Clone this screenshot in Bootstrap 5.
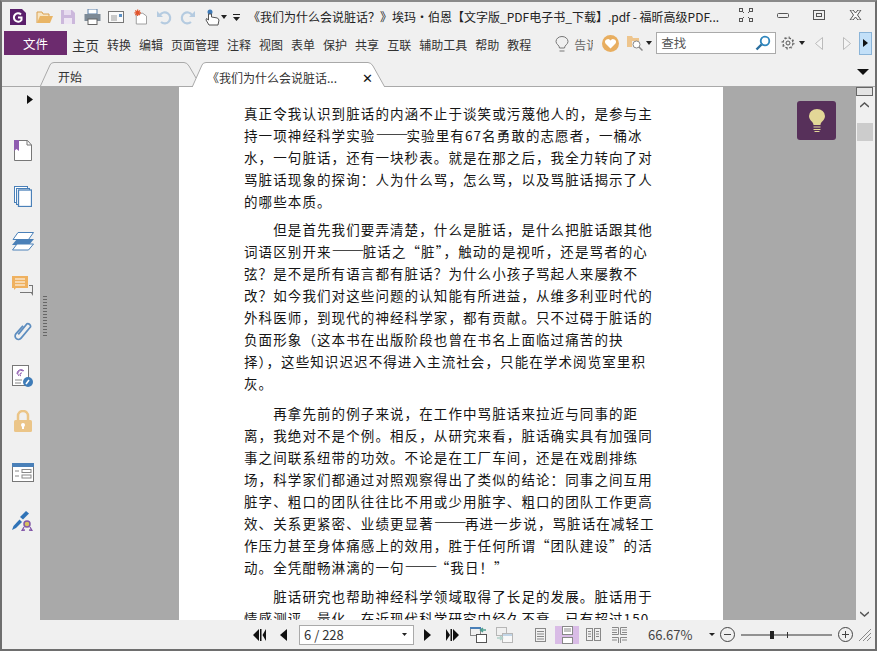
<!DOCTYPE html>
<html lang="zh"><head><meta charset="utf-8"><title>福昕高级PDF</title>
<link href="https://cdn.jsdelivr.net/npm/bootstrap@5.3.0/dist/css/bootstrap.min.css" rel="stylesheet">
<style>
html,body{margin:0;width:877px;height:651px;overflow:hidden;background:#f0f0f0}
body{font-family:"Noto Sans CJK SC","Liberation Sans",sans-serif;font-size:12px;color:#333}
.appwin{width:877px;height:651px;border:2px solid #6e6e6e;border-top-color:#8a8a8a;background:#f0f0f0;display:flex;flex-direction:column}
.titlerow{height:28px;flex:none;padding-top:2px;padding-right:2px}
.slot{flex:none;display:flex;align-items:center;justify-content:center}
.wintitle{margin-left:4px;font-size:12px;white-space:nowrap;color:#222}
.winctl{margin-top:-4px}
.w8{width:8px}.w9{width:9px}.w12{width:12px}.w13{width:13px}.w14{width:14px}.w15{width:15px}.w16{width:16px}.w17{width:17px}.w18{width:18px}.w20{width:20px}.w21{width:21px}.w24{width:24px}.w26{width:26px}.w28{width:28px}.w30{width:30px}.w36{width:36px}.w38{width:38px}.w103{width:103px}.w264{width:264px}
.ml2{margin-left:2px}.ml3{margin-left:3px}.ml4{margin-left:4px}.ml6{margin-left:6px}.ml7{margin-left:7px}.ml8{margin-left:8px}.ml9{margin-left:9px}.ml12{margin-left:12px}.ml23{margin-left:23px}.mln1{margin-left:-1px}.mln2{margin-left:-2px}
.menurow{height:26px;flex:none}
.filebtn{width:63px;height:24px;margin-left:2px;margin-top:-1px;padding-top:3px;background:#6c2b6e;color:#fff;display:flex;align-items:center;justify-content:center;font-size:12.5px;flex:none}
.menuitems{gap:8px;margin-left:5px;padding-top:4px;color:#333;white-space:nowrap}
.menuitems span:first-child{font-size:13.5px}
.tellme{width:19px;overflow:hidden;color:#666;justify-content:flex-start;white-space:nowrap;padding-top:4px}
.bulbslot{padding-top:3px}
.searchbox{width:120px;height:22px;background:#fff;border:1px solid #aaa;color:#555;padding-left:4px;display:flex;align-items:center;justify-content:space-between;flex:none;font-size:12.5px}
.nextbtn{height:23px;background:#c3e0f8;border:1px solid #8ab4d8}
.tabrow{height:31px;flex:none;border-bottom:1px solid #a9a9a9;position:relative}
.tabitem{position:absolute;top:6px;height:25px;padding-top:6px;white-space:nowrap}
.tabitem svg{position:absolute;left:0;top:0}
.tabitem span,.tabitem b{position:relative}
.tabhome{left:38px;width:156px;padding-left:18px}
.tabdoc{left:190px;width:195px;padding-left:15px;height:26px}
.tabname{display:inline-block;width:155px}
.tabclose{font-size:13px;color:#111}
.tabmore{position:absolute;left:855px;top:13px}
.mainrow{flex:1;min-height:0;display:flex}
.rail{width:38px;flex:none;background:#f0f0f0;display:flex;flex-direction:column;align-items:center;padding-left:3px}
.railopen{margin-top:8px;margin-left:14px}
.mt36{margin-top:36px}.mt25{margin-top:25px}.mt24{margin-top:24px}.mt23{margin-top:23px}.mt31{margin-top:31px}.mt27{margin-top:27px}
.viewer{flex:1;background:#a9a9a9;position:relative;overflow:hidden;display:flex}
.pdfpage{width:544px;height:533px;background:#fff;flex:none;margin-left:139px;padding:15px 60px 0 65px;font-size:13.5px;letter-spacing:1.1px;color:#151515;overflow:hidden}
.ln{height:22px;line-height:22px;white-space:nowrap}
.ln.first{text-indent:29.2px}
.ln.cutoff{height:13px;overflow:hidden}
.gap6{margin-bottom:6px}.gap8{margin-bottom:8px}.gap7{margin-bottom:7px}
.dashes{font-size:16.500px;letter-spacing:-1.900px;line-height:1}
.ideabtn{position:absolute;left:757px;top:14px;width:39px;height:39px;border-radius:3px;background:#57305a;display:flex;align-items:center;justify-content:center}
.grip{position:absolute;left:3px;top:208px;width:4px;height:43px;background-image:radial-gradient(circle,#666 50%,transparent 55%);background-size:2px 3px}
.sbar{width:19px;flex:none;background:#f0f0f0;display:flex;flex-direction:column;align-items:center;padding-right:2px}
.sbtn{width:17px;height:9px;background:#e4e4e4;border:1px solid #666;flex:none}
.supicon{margin-top:6px}
.sthumb{width:16px;height:18px;background:#ccc;margin-top:15px;flex:none}
.sdownicon{margin-top:auto;margin-bottom:3px}
.statusrow{height:29px;flex:none}
.pagebox{width:115px;height:20px;background:#fff;border:1px solid #aaa;color:#333;font-size:13px;padding:0 6px 0 4px;display:flex;align-items:center;justify-content:space-between;flex:none}
.zoomtxt{font-size:13px;color:#444;width:58px;flex:none;margin-left:17px}
.sel{background:#d9bce6;height:18px}
.endalign{justify-content:flex-end}
.dim{opacity:.55}
</style></head><body>
<div class="appwin">
 <div class="titlerow d-flex align-items-center">
  <div class="slot w18 ml7"><svg width="16" height="16" viewBox="0 0 16 16"><rect width="16" height="16" fill="#5a1f6b"/><path d="M12 0h4v4z" fill="#f0f0f0"/><path d="M11 5.500A4.200 4.200 0 1 0 11.500 11V8.500H8" fill="none" stroke="#fff" stroke-width="2"/></svg></div>
  <div class="slot w18 ml8"><svg width="17" height="14" viewBox="0 0 17 14"><path d="M1 13V2h5l1 2h6v2" fill="#f8e6c4" stroke="#d9a050"/><path d="M1 13l3-7h13l-3 7z" fill="#e9b566"/></svg></div>
  <div class="slot w14 ml8"><svg width="14" height="14" viewBox="0 0 14 14"><path d="M0 0h11l3 3v11H0z" fill="#ccb8dc"/><rect x="3" y="0" width="7" height="5" fill="#e7dcef"/><rect x="3" y="8" width="8" height="6" fill="#eee6f3"/></svg></div>
  <div class="slot w18 ml8"><svg width="17" height="16" viewBox="0 0 17 16"><rect x="4" y="0" width="9" height="5" fill="#fff" stroke="#5b7fa6"/><rect x=".5" y="5" width="16" height="7" fill="#7d8a96"/><rect x="4" y="10" width="9" height="5.500" fill="#fff" stroke="#666"/></svg></div>
  <div class="slot w16 ml7"><svg width="16" height="12" viewBox="0 0 16 12"><rect x=".5" y=".5" width="15" height="11" fill="#fafafa" stroke="#777"/><path d="M3 5h6M3 7h6M3 9h6" stroke="#999"/><rect x="11" y="3" width="3" height="3" fill="#5b8fc4"/></svg></div>
  <div class="slot w14 ml9"><svg width="15" height="16" viewBox="0 0 15 16"><path d="M3.500 4h7l4 3v8.500h-11z" fill="#fff" stroke="#999"/><path d="M5 0v7M1.500 3.500h7M2.500 1l5 5M7.500 1l-5 5" stroke="#e2532a" stroke-width="1.300"/></svg></div>
  <div class="slot w16 ml9"><svg width="16" height="15" viewBox="0 0 16 15"><path d="M4 5a5.500 5.500 0 1 1 1 7" fill="none" stroke="#b5cbe0" stroke-width="2.200"/><path d="M1 1v6h6z" fill="#b5cbe0"/></svg></div>
  <div class="slot w16 ml8"><svg width="16" height="15" viewBox="0 0 16 15"><path d="M12 5a5.500 5.500 0 1 0-1 7" fill="none" stroke="#b5cbe0" stroke-width="2.200"/><path d="M15 1v6H9z" fill="#b5cbe0"/></svg></div>
  <div class="slot w15 ml9"><svg width="15" height="17" viewBox="0 0 15 17"><circle cx="5" cy="3" r="2.500" fill="#3d7ab8"/><path d="M3.500 5v6L1.500 9.500 1 11l3 5h9l1-5-1.500-2-6-1V5z" fill="#fff" stroke="#555"/></svg></div>
  <div class="slot w8"><svg width="6" height="4"><path d="M0 0h6L3 4z" fill="#222"/></svg></div>
  <div class="slot w16"><svg width="7" height="7"><path d="M0 0h7v1H0zM0 3h7L3.500 7z" fill="#222"/></svg></div>
  <div class="wintitle">《我们为什么会说脏话？》埃玛·伯恩【文字版_PDF电子书_下载】.pdf - 福昕高级PDF...</div>
  <div class="slot winctl ms-auto w38"><svg width="14" height="14" viewBox="0 0 14 14" fill="none" stroke="#555"><rect x=".5" y=".5" width="3" height="3"/><rect x="10.500" y=".5" width="3" height="3"/><rect x=".5" y="10.500" width="3" height="3"/><rect x="10.500" y="10.500" width="3" height="3"/><path d="M5 5l-1-1M9 5l1-1M5 9l-1 1M9 9l1 1"/></svg></div>
  <div class="slot winctl w36"><svg width="12" height="5"><rect x=".5" y=".5" width="11" height="4" rx="1" fill="none" stroke="#555"/></svg></div>
  <div class="slot winctl w36"><svg width="12" height="10"><rect x=".5" y=".5" width="11" height="9" fill="none" stroke="#555"/><rect x="3.500" y="3.500" width="5" height="3" fill="none" stroke="#555"/></svg></div>
  <div class="slot winctl w36"><svg width="13" height="10" viewBox="0 0 13 10"><path d="M1 0h3l2.500 3L9 0h3L8.500 5 12 10H9L6.500 7 4 10H1l3.500-5z" fill="#f8f8f8" stroke="#555"/></svg></div>
 </div>
 <div class="menurow d-flex align-items-center">
  <div class="filebtn">文件</div>
  <div class="menuitems d-flex align-items-center"><span>主页</span><span>转换</span><span>编辑</span><span>页面管理</span><span>注释</span><span>视图</span><span>表单</span><span>保护</span><span>共享</span><span>互联</span><span>辅助工具</span><span>帮助</span><span>教程</span></div>
  <div class="slot bulbslot w16 ml23"><svg width="14" height="17" viewBox="0 0 14 17" fill="none" stroke="#777"><path d="M4.500 12c0-3-3.500-3.500-3.500-6.500a6 5 0 0 1 12 0C13 8.500 9.500 9 9.500 12zM4.500 15h5"/></svg></div>
  <div class="slot tellme ml4">告诉</div>
  <div class="slot w17 ml9"><svg width="17" height="17" viewBox="0 0 17 17"><circle cx="8.500" cy="8.500" r="8.500" fill="#e8ae60"/><path d="M8.500 13.500l-5-5a2.800 2.800 0 0 1 5-3 2.800 2.800 0 0 1 5 3z" fill="#fff"/></svg></div>
  <div class="slot w17 ml8"><svg width="17" height="16" viewBox="0 0 17 16"><path d="M0 12V1h5l1 2h6v3H5v6z" fill="#eec58d"/><circle cx="9.500" cy="9.500" r="3.500" fill="#fff" stroke="#888"/><path d="M12 12l3.500 3.500" stroke="#888" stroke-width="1.500"/></svg></div>
  <div class="slot w9"><svg width="6" height="4"><path d="M0 0h6L3 4z" fill="#222"/></svg></div>
  <div class="searchbox ml3"><span>查找</span><svg class="me-1" width="16" height="16" viewBox="0 0 16 16"><circle cx="10" cy="6" r="4.300" fill="#fff" stroke="#2f86bd" stroke-width="1.800"/><path d="M6.500 9.500L1.500 14.500" stroke="#2a6f9f" stroke-width="2.400"/></svg></div>
  <div class="slot w20 ml2"><svg width="14" height="14" viewBox="0 0 14 14" fill="none" stroke="#555"><circle cx="7" cy="7" r="2"/><circle cx="7" cy="7" r="5" stroke-width="1.100" stroke-dasharray="2.500 1.420"/><circle cx="7" cy="7" r="6" stroke-dasharray="1.500 3.210"/></svg></div>
  <div class="slot w8"><svg width="6" height="4"><path d="M0 0h6L3 4z" fill="#222"/></svg></div>
  <div class="slot w28 mln1"><svg width="8" height="13"><path d="M7.500 .5v12L.5 6.500z" fill="#f5f5f5" stroke="#bbb"/></svg></div>
  <div class="slot w28"><svg width="8" height="13"><path d="M.5 .5v12l7-6z" fill="#f5f5f5" stroke="#bbb"/></svg></div>
  <div class="slot nextbtn w13 mln2"><svg width="5" height="8"><path d="M0 0v8l5-4z" fill="#111"/></svg></div>
 </div>
 <div class="tabrow">
  <div class="tabitem tabhome"><svg width="156" height="25" viewBox="0 0 156 25"><path d="M0 25L10 3Q11 .5 14 .5H144Q147 .5 149 4L156 16" fill="none" stroke="#a9a9a9"/></svg><span>开始</span></div>
  <div class="tabitem tabdoc"><svg width="195" height="26" viewBox="0 0 195 26"><path d="M0 25.500L10 3Q11 .5 14 .5H176Q179 .5 181 4L193 25.500" fill="#fff" stroke="#a9a9a9"/></svg><span class="tabname">《我们为什么会说脏话...</span><b class="fw-normal tabclose">✕</b></div>
  <svg class="tabmore" width="12" height="6"><path d="M0 0h12L6 6z" fill="#111"/></svg>
 </div>
 <div class="mainrow">
  <div class="rail">
   <svg class="railopen" width="6" height="9"><path d="M0 0v9l6-4.500z" fill="#111"/></svg>
   <svg class="mt36" width="18" height="21" viewBox="0 0 18 21"><path d="M.5 8v12.500h17V5l-4-4.500H5" fill="#fff" stroke="#777"/><path d="M13 .5V5h4.500" fill="none" stroke="#777"/><path d="M0 0h5v11l-2.500-2L0 11z" fill="#8f5cb0"/></svg>
   <svg class="mt25" width="18" height="21" viewBox="0 0 18 21" fill="#fff" stroke="#4a80b8"><rect x=".5" y=".5" width="13" height="16"/><rect x="2.500" y="2.500" width="13" height="16"/><rect x="4.500" y="4" width="13" height="16.500" stroke-width="1.300"/></svg>
   <svg class="mt25" width="22" height="19" viewBox="0 0 22 19"><path d="M6 .5h15.500l-5 7H1z" fill="#fff" stroke="#4a80b8"/><path d="M5 7h17l-5 6H0z" fill="#4a80b8"/><path d="M5 12h16.500l-5 6H.5z" fill="#fff" stroke="#4a80b8"/></svg>
   <svg class="mt25" width="21" height="21" viewBox="0 0 21 21"><path d="M0 0h16v12H4l-2 2v-2H0z" fill="#efb15f"/><path d="M3 3h10M3 6h10M3 9h10" stroke="#fff" stroke-width="1.200"/><path d="M8 14v2h12v-6h-3v-1h4v11l-2-3H8z" fill="#777"/></svg>
   <svg class="mt24" width="20" height="20" viewBox="0 0 20 21" fill="none" stroke="#5d8dbf" stroke-width="1.800"><path d="M5 14L14 3a3 3 0 0 1 4 3L8 18a3.500 3.500 0 0 1-5.500-4.500L10 5"/></svg>
   <svg class="mt24" width="22" height="22" viewBox="0 0 22 22"><rect x=".5" y=".5" width="16" height="20" fill="#fff" stroke="#777"/><path d="M5 9a4 4 0 0 1 7-3M7 11a3 3 0 0 1 4-5M9 11a1 1 0 0 1 1-3" fill="none" stroke="#8f5cb0"/><path d="M3 15h7M3 18h6" stroke="#888"/><circle cx="16" cy="17" r="5" fill="#3f7cb8"/><path d="M14 19l3-4" stroke="#fff" stroke-width="1.500"/></svg>
   <svg class="mt23" width="18" height="22" viewBox="0 0 18 22"><path d="M4 10V6a5 5 0 0 1 10 0v4" fill="none" stroke="#ebc588" stroke-width="2.500"/><rect y="10" width="18" height="12" rx="1.500" fill="#ebc588"/><circle cx="9" cy="15" r="2" fill="#fff"/><rect x="8" y="15" width="2" height="4" fill="#fff"/></svg>
   <svg class="mt31" width="22" height="19" viewBox="0 0 22 19"><rect x=".5" y=".5" width="21" height="18" fill="#fff" stroke="#777"/><rect width="22" height="4" fill="#4a80b8"/><path d="M3 8h4M3 13h4" stroke="#888"/><rect x="10" y="6.500" width="9" height="3" fill="none" stroke="#888"/><rect x="10" y="12" width="9" height="3" fill="none" stroke="#888"/></svg>
   <svg class="mt27" width="21" height="22" viewBox="0 0 21 22"><path d="M0 21l1.500-4 6-6.500 2.500 2.500-6 6z" fill="#2f73b7"/><path d="M8 8l6-6 3 2.500-6 6z" fill="#2f73b7"/><circle cx="15" cy="15" r="3" fill="#d8c060" stroke="#8257a8" stroke-width="1.500"/><path d="M12 18l-2 3.500 3-.5M18 18l2 3.500-3-.5" fill="none" stroke="#8257a8" stroke-width="1.300"/></svg>
  </div>
  <div class="viewer">
   <div class="grip"></div>
   <div class="pdfpage">
    <div class="gap6">
     <div class="ln">真正令我认识到脏话的内涵不止于谈笑或污蔑他人的，是参与主</div>
     <div class="ln">持一项神经科学实验<span class="dashes">——</span>实验里有67名勇敢的志愿者，一桶冰</div>
     <div class="ln">水，一句脏话，还有一块秒表。就是在那之后，我全力转向了对</div>
     <div class="ln">骂脏话现象的探询：人为什么骂，怎么骂，以及骂脏话揭示了人</div>
     <div class="ln">的哪些本质。</div>
    </div>
    <div class="gap8">
     <div class="ln first">但是首先我们要弄清楚，什么是脏话，是什么把脏话跟其他</div>
     <div class="ln">词语区别开来<span class="dashes">——</span>脏话之“脏”，触动的是视听，还是骂者的心</div>
     <div class="ln">弦？是不是所有语言都有脏话？为什么小孩子骂起人来屡教不</div>
     <div class="ln">改？如今我们对这些问题的认知能有所进益，从维多利亚时代的</div>
     <div class="ln">外科医师，到现代的神经科学家，都有贡献。只不过碍于脏话的</div>
     <div class="ln">负面形象（这本书在出版阶段也曾在书名上面临过痛苦的抉</div>
     <div class="ln">择），这些知识迟迟不得进入主流社会，只能在学术阅览室里积</div>
     <div class="ln">灰。</div>
    </div>
    <div class="gap7">
     <div class="ln first">再拿先前的例子来说，在工作中骂脏话来拉近与同事的距</div>
     <div class="ln">离，我绝对不是个例。相反，从研究来看，脏话确实具有加强同</div>
     <div class="ln">事之间联系纽带的功效。不论是在工厂车间，还是在戏剧排练</div>
     <div class="ln">场，科学家们都通过对照观察得出了类似的结论：同事之间互用</div>
     <div class="ln">脏字、粗口的团队往往比不用或少用脏字、粗口的团队工作更高</div>
     <div class="ln">效、关系更紧密、业绩更显著<span class="dashes">——</span>再进一步说，骂脏话在减轻工</div>
     <div class="ln">作压力甚至身体痛感上的效用，胜于任何所谓“团队建设”的活</div>
     <div class="ln">动。全凭酣畅淋漓的一句<span class="dashes">——</span>“我日！”</div>
    </div>
    <div>
     <div class="ln first">脏话研究也帮助神经科学领域取得了长足的发展。脏话用于</div>
     <div class="ln cutoff">情感测评、量化，在近现代科学研究中经久不衰，已有超过150</div>
    </div>
   </div>
   <div class="ideabtn"><svg width="16" height="23" viewBox="0 0 16 23"><path d="M4.500 16c0-3.500-4.500-4.500-4.500-9a8 7 0 0 1 16 0c0 4.500-4.500 5.500-4.500 9z" fill="#e3d797"/><path d="M4.500 18h7M4.500 20.500h7M5.500 22.500h5" stroke="#e3d797" stroke-width="1.200"/></svg></div>
  </div>
  <div class="sbar">
   <div class="sbtn"></div>
   <svg class="supicon" width="9" height="6" viewBox="0 0 9 6"><path d="M0 5l4.500-4L9 5" fill="none" stroke="#555" stroke-width="1.500"/></svg>
   <div class="sthumb"></div>
   <svg class="sdownicon" width="9" height="6" viewBox="0 0 9 6"><path d="M0 1l4.500 4L9 1" fill="none" stroke="#555" stroke-width="1.500"/></svg>
  </div>
 </div>
 <div class="statusrow d-flex align-items-center">
  <div class="slot endalign w264"><svg width="13" height="12"><path d="M6 0v12L0 6zM7 0h1.500v12H7zM13 0v12L9.500 6z" fill="#111"/></svg></div>
  <div class="slot endalign w21"><svg width="7" height="12"><path d="M7 0v12L0 6z" fill="#111"/></svg></div>
  <div class="pagebox ml12"><span>6 / 228</span><svg width="5" height="3"><path d="M0 0h5L2.500 3z" fill="#222"/></svg></div>
  <div class="slot w26"><svg width="7" height="12"><path d="M0 0v12L7 6z" fill="#111"/></svg></div>
  <div class="slot w24"><svg width="13" height="12"><path d="M0 0v12l4-6zM4.500 0H6v12H4.500zM7 0v12l6-6z" fill="#111"/></svg></div>
  <div class="slot w28"><svg width="17" height="16" viewBox="0 0 17 16"><rect x=".5" y=".5" width="10" height="8" fill="none" stroke="#888"/><rect width="11" height="2" fill="#4a80b8"/><rect x="6.500" y="7.500" width="10" height="8" fill="#fff" stroke="#555"/><path d="M16 3h-5M13 1L10.500 3 13 5" fill="none" stroke="#4f9d8f" stroke-width="1.500"/></svg></div>
  <div class="slot w24"><svg class="dim" width="17" height="16" viewBox="0 0 17 16"><rect x=".5" y=".5" width="10" height="8" fill="none" stroke="#888"/><rect x="6.500" y="6.500" width="10" height="9" fill="#fff" stroke="#888"/><rect x="7" y="7" width="9" height="2" fill="#9cc0de"/><path d="M1 11h5M4 9l2.500 2L4 13" fill="none" stroke="#7fb8ac" stroke-width="1.500"/></svg></div>
  <div class="slot w30 ml9"><svg width="11" height="14" viewBox="0 0 11 14" fill="none" stroke="#888"><rect x=".5" y=".5" width="10" height="13"/><path d="M2 3.500h7M2 6h7M2 8.500h7M2 11h7"/></svg></div>
  <div class="slot sel w24"><svg width="11" height="18" viewBox="0 0 11 18" fill="#fff" stroke="#888"><rect x=".5" y=".5" width="10" height="8"/><rect x=".5" y="11.500" width="10" height="6"/><path d="M2 3h7M2 5h7"/></svg></div>
  <div class="slot w28"><svg width="15" height="13" viewBox="0 0 15 13" fill="none" stroke="#888"><rect x=".5" y=".5" width="6" height="12"/><rect x="8.500" y=".5" width="6" height="12"/><path d="M2 3.500h3M2 6h3M2 8.500h3M10 3.500h3M10 6h3M10 8.500h3"/></svg></div>
  <div class="slot w24"><svg width="15" height="16" viewBox="0 0 15 16" fill="none" stroke="#888"><path d="M0 .5h6.500v7H0M0 3h5M0 5.500h5M15 .5H8.500v7H15M15 3h-5M15 5.500h-5M0 10.500h6.500V16M15 10.500H8.500V16M0 13h5M15 13h-5"/></svg></div>
  <div class="zoomtxt">66.67%</div>
  <div class="slot w12"><svg width="6" height="3"><path d="M0 0h6L3 3z" fill="#222"/></svg></div>
  <div class="slot w15 ml2"><svg width="15" height="15" fill="none" stroke="#444"><circle cx="7.500" cy="7.500" r="7"/><path d="M4 7.500h7"/></svg></div>
  <div class="slot w103"><svg width="91" height="10"><path d="M0 5h91M46.500 2v6" stroke="#333"/><rect x="29" y="1" width="4" height="8" fill="#222"/></svg></div>
  <div class="slot w15"><svg width="15" height="15" fill="none" stroke="#444"><circle cx="7.500" cy="7.500" r="7"/><path d="M4 7.500h7M7.500 4v7"/></svg></div>
  <div class="slot w12 ml6"><svg width="12" height="12" fill="none" stroke="#888"><path d="M0 12L12 0M4 12l8-8M8 12l4-4"/></svg></div>
 </div>
</div>
</body></html>
